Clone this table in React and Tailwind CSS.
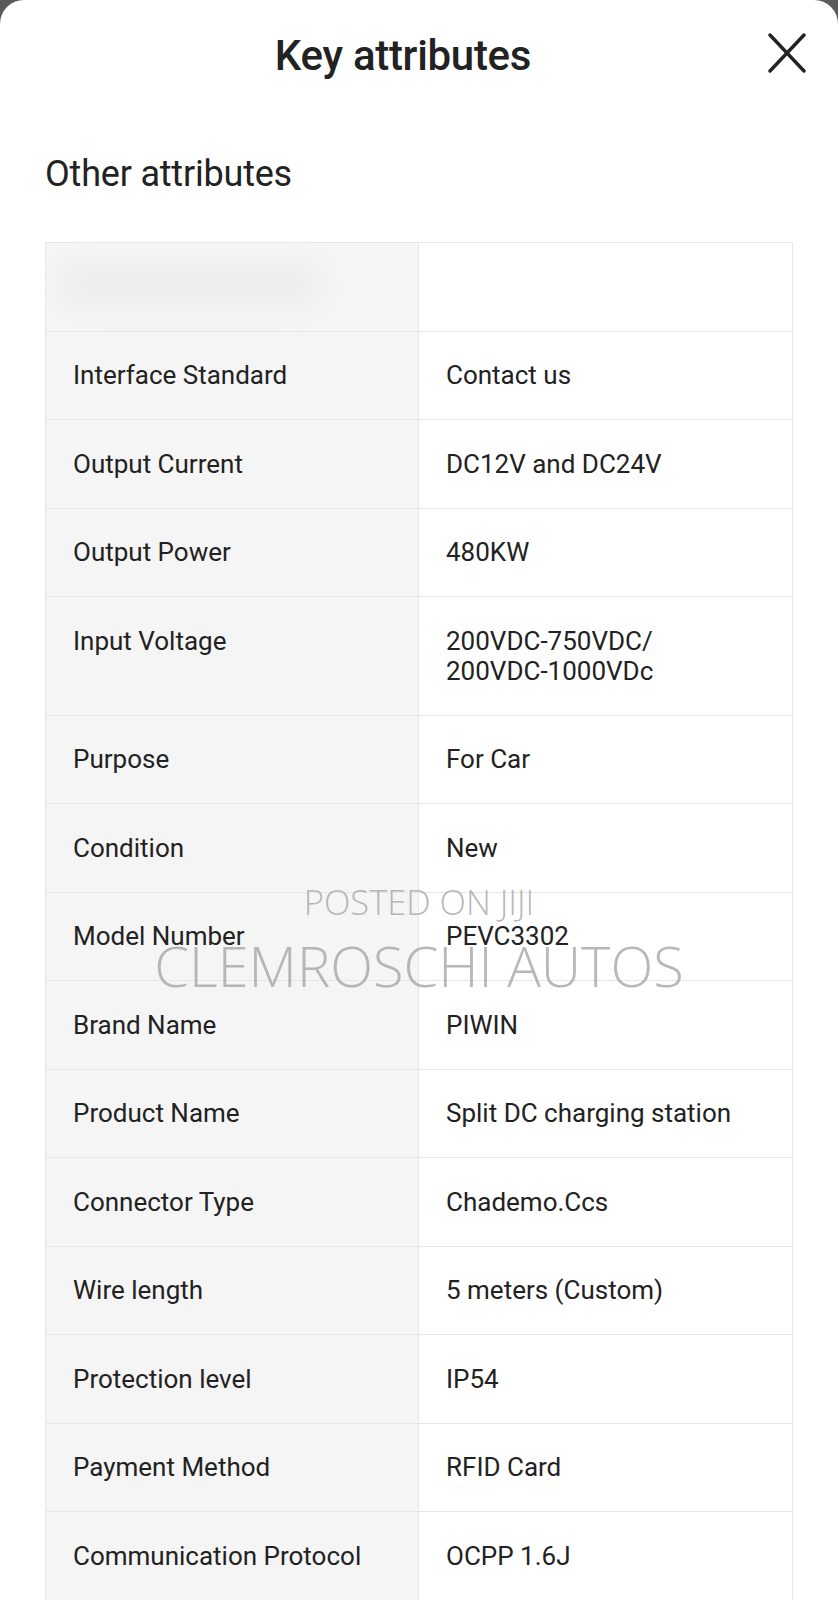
import React from "react";

const rows = [
  ["Interface Standard", ["Contact us"]],
  ["Output Current", ["DC12V and DC24V"]],
  ["Output Power", ["480KW"]],
  ["Input Voltage", ["200VDC-750VDC/", "200VDC-1000VDc"]],
  ["Purpose", ["For Car"]],
  ["Condition", ["New"]],
  ["Model Number", ["PEVC3302"]],
  ["Brand Name", ["PIWIN"]],
  ["Product Name", ["Split DC charging station"]],
  ["Connector Type", ["Chademo.Ccs"]],
  ["Wire length", ["5 meters (Custom)"]],
  ["Protection level", ["IP54"]],
  ["Payment Method", ["RFID Card"]],
  ["Communication Protocol", ["OCPP 1.6J"]],
];

export default function App() {
  return (
    <div className="w-[838px] h-[1600px] overflow-hidden bg-[#5a5a5a]" style={{ fontFamily: "Roboto, 'Noto Sans', sans-serif" }}>
      <div className="relative h-full bg-white rounded-t-[24px] text-[#222222]">
        {/* Header */}
        <div className="flex items-start pl-[38px] pr-[32px] pt-[30px]">
          <h1 className="flex-1 text-center text-[42px] leading-[52px] font-medium tracking-[-0.3px]">Key attributes</h1>
          <svg className="mt-[3px] w-[38px] h-[40px]" viewBox="0 0 38 40" fill="none">
            <path d="M2 2 L36 38 M36 2 L2 38" stroke="#222" strokeWidth="3.4" strokeLinecap="round" />
          </svg>
        </div>

        {/* Section title */}
        <h2 className="mt-[71px] pl-[45px] text-[36px] leading-[42px] tracking-[-0.2px]">Other attributes</h2>

        {/* Table */}
        <div className="mt-[47px] mx-[45px] border-t border-l border-r border-[#e6e6e6]">
          <div className="grid grid-cols-[373px_1fr] h-[88.5px] border-b border-[#e6e6e6]">
            <div className="relative bg-[#f5f5f5] border-r border-[#e6e6e6] overflow-hidden">
              <div className="absolute left-[14px] top-[20px] w-[260px] h-[42px] rounded-full bg-[#ededed] blur-md"></div>
            </div>
            <div className="bg-white"></div>
          </div>
          {rows.map(([label, values]) => (
            <div key={label} className="grid grid-cols-[373px_1fr] border-b border-[#e6e6e6] text-[26px] leading-[30px]">
              <div className="bg-[#f5f5f5] border-r border-[#e6e6e6] pl-[27px] py-[28.75px]">{label}</div>
              <div className="bg-white pl-[27px] py-[28.75px]">
                {values.map((v) => (
                  <div key={v}>{v}</div>
                ))}
              </div>
            </div>
          ))}
        </div>

        {/* Watermark */}
        <div className="pointer-events-none absolute inset-x-0 top-[883px] flex flex-col items-center text-[rgba(160,160,160,0.75)]" style={{ fontFamily: "'Open Sans', sans-serif" }}>
          <div className="text-[34.5px] leading-[38px] font-light">POSTED ON JIJI</div>
          <div className="mt-[13px] text-[56px] leading-[62px] font-light">CLEMROSCHI AUTOS</div>
        </div>
      </div>
    </div>
  );
}
